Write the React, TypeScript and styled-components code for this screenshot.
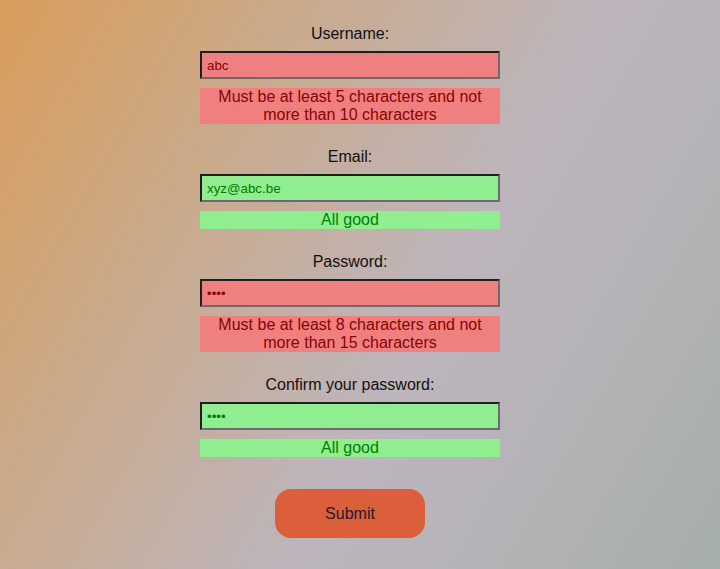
import React from "react";
import styled, { createGlobalStyle } from "styled-components";

const Global = createGlobalStyle`
  html, body { margin: 0; padding: 0; }
  body {
    font-family: "Liberation Sans", Arial, sans-serif;
    min-height: 569px;
    background: linear-gradient(120deg, #d89d5a 0%, #c8ab91 32%, #bdb5bb 58%, #b8b4ba 70%, #a5aea9 100%);
  }
`;

const Page = styled.div`
  min-height: 569px;
  display: flex;
  justify-content: center;
  padding-right: 20px;
`;

const Form = styled.form`
  width: 300px;
  display: flex;
  flex-direction: column;
  align-items: stretch;
  padding-top: 25px;
`;

const Field = styled.div`
  display: flex;
  flex-direction: column;
  margin-bottom: 24px;
`;

const Label = styled.label`
  font-size: 16px;
  line-height: 18px;
  color: #111;
  text-align: center;
  margin-bottom: 8px;
`;

const Input = styled.input<{ $ok: boolean }>`
  box-sizing: border-box;
  width: 300px;
  height: 28px;
  margin: 0 0 9px;
  padding: 0 5px;
  font-family: "Liberation Sans", Arial, sans-serif;
  font-size: 13.33px;
  border-width: 2px;
  border-style: solid;
  border-color: #1f1f1f #6b6b6b #6b6b6b #1f1f1f;
  background: ${(p) => (p.$ok ? "#90ee90" : "#f08080")};
  color: ${(p) => (p.$ok ? "#007a00" : "#8b0000")};
  outline: none;
`;

const Message = styled.div<{ $ok: boolean }>`
  font-size: 16px;
  line-height: 18px;
  text-align: center;
  padding: 0 12px;
  background: ${(p) => (p.$ok ? "#90ee90" : "#f08080")};
  color: ${(p) => (p.$ok ? "#008000" : "#8b0000")};
`;

const ButtonRow = styled.div`
  display: flex;
  justify-content: center;
  padding-top: 8px;
`;

const Submit = styled.button`
  width: 150px;
  height: 49px;
  border: none;
  border-radius: 16px;
  background: #dc5f3b;
  color: #1c1c2a;
  font-family: "Liberation Sans", Arial, sans-serif;
  font-size: 16px;
  cursor: pointer;
`;

const fields = [
  { label: "Username:", type: "text", value: "abc", ok: false, msg: "Must be at least 5 characters and not more than 10 characters" },
  { label: "Email:", type: "text", value: "xyz@abc.be", ok: true, msg: "All good" },
  { label: "Password:", type: "password", value: "abcd", ok: false, msg: "Must be at least 8 characters and not more than 15 characters" },
  { label: "Confirm your password:", type: "password", value: "abcd", ok: true, msg: "All good" },
];

export default function App() {
  return (
    <>
      <Global />
      <Page>
        <Form onSubmit={(e) => e.preventDefault()}>
          {fields.map((f, i) => (
            <Field key={i}>
              <Label>{f.label}</Label>
              <Input type={f.type} defaultValue={f.value} $ok={f.ok} />
              <Message $ok={f.ok}>{f.msg}</Message>
            </Field>
          ))}
          <ButtonRow>
            <Submit type="submit">Submit</Submit>
          </ButtonRow>
        </Form>
      </Page>
    </>
  );
}
